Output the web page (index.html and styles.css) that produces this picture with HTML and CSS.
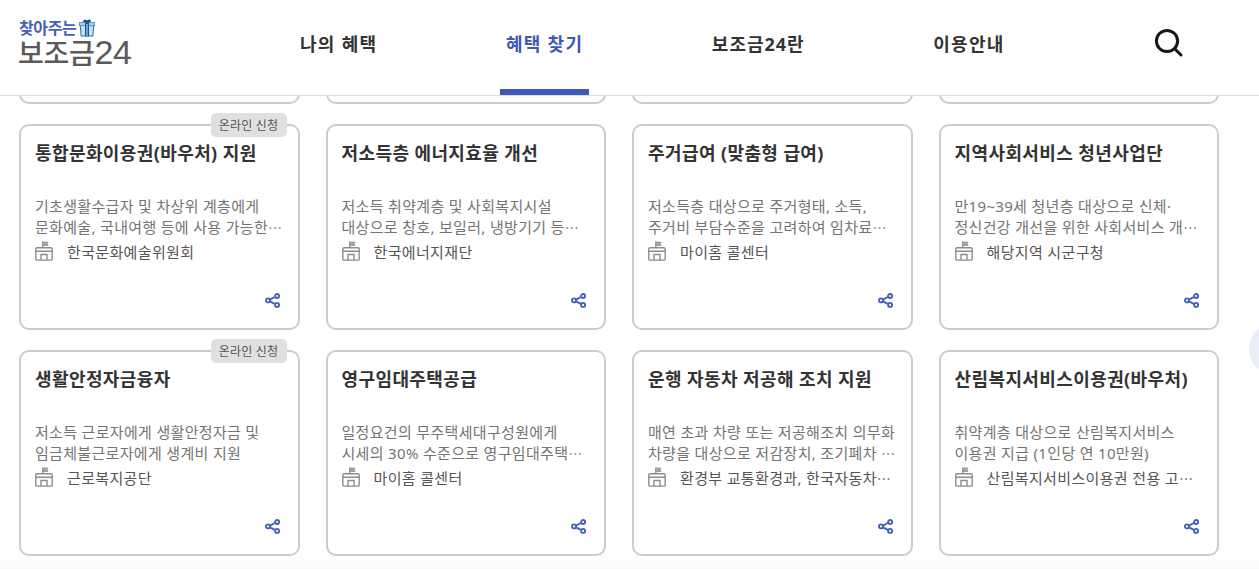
FILE: index.html
```html
<!DOCTYPE html>
<html lang="ko">
<head>
  <meta charset="UTF-8">
  <meta name="viewport" content="width=device-width, initial-scale=1.0">
  <title>보조금24</title>
  <link rel="stylesheet" href="styles.css">
</head>
<body>

  <!-- Shared icons -->
  <svg class="icon-defs" width="0" height="0">
    <symbol id="icon-office" viewBox="0 0 18 20">
      <g fill="none" stroke="#8c8c8c" stroke-width="1.4">
        <rect x="0.8" y="6.7" width="16.4" height="12.4" rx="1.2"/>
        <path d="M1 10.3H17M6 19V13.5H12V19M7.8 7V0.5"/>
        <path d="M8 1.2H13L11.7 2.9L13 4.3H8" fill="#aaa" stroke-width="1"/>
      </g>
    </symbol>
    <symbol id="icon-share" viewBox="0 0 16 15">
      <g fill="none" stroke="#4560b9" stroke-width="1.9">
        <path d="M5 6.6L9.8 4M5 8.3L9.8 10.9"/>
        <circle cx="3" cy="7.4" r="2"/>
        <circle cx="12.1" cy="3" r="2"/>
        <circle cx="12.1" cy="11.9" r="2"/>
      </g>
    </symbol>
  </svg>

  <header class="header">
    <a class="logo">
      <span class="logo-top">찾아주는
        <svg class="gift" width="16" height="18" viewBox="0 0 16 18">
          <path d="M1.3 6H14.7L13.9 17H2.1Z" fill="#c2e4f7" stroke="#2b6ca0" stroke-width="1"/>
          <rect x="0.3" y="3.4" width="15.4" height="3.4" fill="#a5d5f0" stroke="#2b6ca0" stroke-width="0.6"/>
          <path d="M6 3.5H10V17.4H6Z" fill="#17598f"/>
          <path d="M7.4 5V17H8.6V5Z" fill="#a5d5f0"/>
          <path d="M8 3.8L3.6 2.6L5.5 0.4L8 1.6L10.5 0.2L12.3 2.5Z" fill="#124c7e"/>
        </svg>
      </span>
      <span class="logo-name">보조금<span class="logo-num">24</span></span>
    </a>
    <nav class="nav">
      <a class="nav-item">나의 혜택</a>
      <a class="nav-item active">혜택 찾기</a>
      <a class="nav-item nav-about">보조금24란</a>
      <a class="nav-item">이용안내</a>
    </nav>
    <svg class="search" width="30" height="30" viewBox="0 0 30 30" fill="none" stroke="#171717" stroke-width="3">
      <circle cx="13" cy="13" r="10.6"/>
      <path d="M20.5 20.5L27 27" stroke-linecap="round"/>
    </svg>
  </header>

  <main class="content">
    <div class="grid">
      <!-- Row scrolled under the header -->
      <div class="card"></div>
      <div class="card"></div>
      <div class="card"></div>
      <div class="card"></div>

      <div class="card">
        <span class="badge">온라인 신청</span>
        <h3 class="title">통합문화이용권(바우처) 지원</h3>
        <p class="desc">기초생활수급자 및 차상위 계층에게<br>문화예술, 국내여행 등에 사용 가능한<span class="more">…</span></p>
        <div class="org"><svg class="office"><use href="#icon-office"/></svg><span>한국문화예술위원회</span></div>
        <svg class="share"><use href="#icon-share"/></svg>
      </div>
      <div class="card">
        <h3 class="title">저소득층 에너지효율 개선</h3>
        <p class="desc">저소득 취약계층 및 사회복지시설<br>대상으로 창호, 보일러, 냉방기기 등<span class="more">…</span></p>
        <div class="org"><svg class="office"><use href="#icon-office"/></svg><span>한국에너지재단</span></div>
        <svg class="share"><use href="#icon-share"/></svg>
      </div>
      <div class="card">
        <h3 class="title">주거급여 (맞춤형 급여)</h3>
        <p class="desc">저소득층 대상으로 주거형태, 소득,<br>주거비 부담수준을 고려하여 임차료<span class="more">…</span></p>
        <div class="org"><svg class="office"><use href="#icon-office"/></svg><span>마이홈 콜센터</span></div>
        <svg class="share"><use href="#icon-share"/></svg>
      </div>
      <div class="card">
        <h3 class="title">지역사회서비스 청년사업단</h3>
        <p class="desc">만19~39세 청년층 대상으로 신체·<br>정신건강 개선을 위한 사회서비스 개<span class="more">…</span></p>
        <div class="org"><svg class="office"><use href="#icon-office"/></svg><span>해당지역 시군구청</span></div>
        <svg class="share"><use href="#icon-share"/></svg>
      </div>

      <div class="card">
        <span class="badge">온라인 신청</span>
        <h3 class="title">생활안정자금융자</h3>
        <p class="desc">저소득 근로자에게 생활안정자금 및<br>임금체불근로자에게 생계비 지원</p>
        <div class="org"><svg class="office"><use href="#icon-office"/></svg><span>근로복지공단</span></div>
        <svg class="share"><use href="#icon-share"/></svg>
      </div>
      <div class="card">
        <h3 class="title">영구임대주택공급</h3>
        <p class="desc">일정요건의 무주택세대구성원에게<br>시세의 30% 수준으로 영구임대주택<span class="more">…</span></p>
        <div class="org"><svg class="office"><use href="#icon-office"/></svg><span>마이홈 콜센터</span></div>
        <svg class="share"><use href="#icon-share"/></svg>
      </div>
      <div class="card">
        <h3 class="title">운행 자동차 저공해 조치 지원</h3>
        <p class="desc">매연 초과 차량 또는 저공해조치 의무화<br>차량을 대상으로 저감장치, 조기폐차 <span class="more">…</span></p>
        <div class="org"><svg class="office"><use href="#icon-office"/></svg><span>환경부 교통환경과, 한국자동차<span class="more">…</span></span></div>
        <svg class="share"><use href="#icon-share"/></svg>
      </div>
      <div class="card">
        <h3 class="title">산림복지서비스이용권(바우처)</h3>
        <p class="desc">취약계층 대상으로 산림복지서비스<br>이용권 지급 (1인당 연 10만원)</p>
        <div class="org"><svg class="office"><use href="#icon-office"/></svg><span>산림복지서비스이용권 전용 고<span class="more">…</span></span></div>
        <svg class="share"><use href="#icon-share"/></svg>
      </div>
    </div>
  </main>

  <div class="floating-btn"></div>
  <div class="bottom-shade"></div>

</body>
</html>
```
FILE: styles.css
```css
* {
  box-sizing: border-box;
}

body {
  margin: 0;
  height: 569px;
  overflow: hidden;
  position: relative;
  background-color: #fff;
  color: #333;
  font-family: "Noto Sans", "Noto Sans CJK KR", sans-serif;
}

.icon-defs {
  position: absolute;
}

/* Header */
.header {
  display: flex;
  align-items: flex-start;
  height: 96px;
  padding-left: 19px;
  border-bottom: 1px solid #d9dcdf;
}

.logo {
  width: 275.5px;
  padding-top: 17px;
  display: flex;
  flex-direction: column;
}

.logo-top {
  display: flex;
  gap: 3px;
  height: 20px;
  line-height: 22px;
  font-size: 16px;
  font-weight: 700;
  letter-spacing: -0.4px;
  color: #4560b9;
}

.gift {
  margin-top: 2px;
}

.logo-name {
  height: 32px;
  margin-left: -1px;
  line-height: 31px;
  font-family: "Noto Sans CJK KR", sans-serif;
  font-size: 28px;
  font-weight: 500;
  letter-spacing: -0.3px;
  color: #5a5a5a;
}

.logo-num {
  font-family: "Liberation Sans", sans-serif;
  font-size: 34px;
  font-weight: 400;
  line-height: 0;
}

.nav {
  display: flex;
  gap: 117.5px;
}

.nav-item {
  height: 95px;
  padding: 0 5.5px;
  line-height: 88px;
  font-size: 18px;
  font-weight: 700;
  letter-spacing: 1.3px;
  white-space: nowrap;
}

.nav-item.active {
  color: #3f58b5;
  border-bottom: 6px solid #3f58b5;
}

.nav-about {
  letter-spacing: 1px;
}

.search {
  margin: 28px 75px 0 auto;
}

/* Cards */
.content {
  height: 473px;
  overflow: hidden;
}

.grid {
  display: grid;
  grid-template-columns: repeat(4, 280.5px);
  grid-auto-rows: 206px;
  gap: 20px 26px;
  margin: -198px 0 0 19px;
}

.card {
  position: relative;
  display: flex;
  flex-direction: column;
  padding: 14px;
  border: 2px solid #ccc;
  border-radius: 10px;
  white-space: nowrap;
}

.badge {
  position: absolute;
  top: -13px;
  right: 11px;
  width: 76px;
  height: 24px;
  border-radius: 5px;
  background-color: #e0e0e0;
  color: #555;
  font-size: 12px;
  line-height: 25px;
  letter-spacing: 0.2px;
  text-align: center;
}

.title {
  margin: 0 0 29px;
  font-size: 18px;
  line-height: 27px;
  letter-spacing: 0.4px;
}

.desc {
  margin: 0;
  color: #747474;
  font-size: 15px;
  line-height: 21px;
  letter-spacing: 0.32px;
}

.more {
  font-family: "Noto Sans CJK KR", sans-serif;
  font-size: 14px;
  line-height: 0;
}

.org {
  display: flex;
  gap: 14px;
  height: 28px;
  line-height: 28px;
  color: #555;
  font-size: 15px;
  letter-spacing: 0.35px;
}

.office {
  width: 18px;
  height: 20px;
  margin-top: 3px;
}

.share {
  width: 16px;
  height: 15px;
  margin: 27px 3px 0 auto;
}

/* Floating parts */
.floating-btn {
  position: absolute;
  top: 322px;
  left: 1249px;
  width: 54px;
  height: 54px;
  border-radius: 50%;
  background-color: #e9edfa;
}

.bottom-shade {
  position: absolute;
  left: 0;
  right: 0;
  bottom: 0;
  height: 18px;
  background: linear-gradient(rgba(0, 0, 0, 0), rgba(0, 0, 0, 0.02));
}
```
